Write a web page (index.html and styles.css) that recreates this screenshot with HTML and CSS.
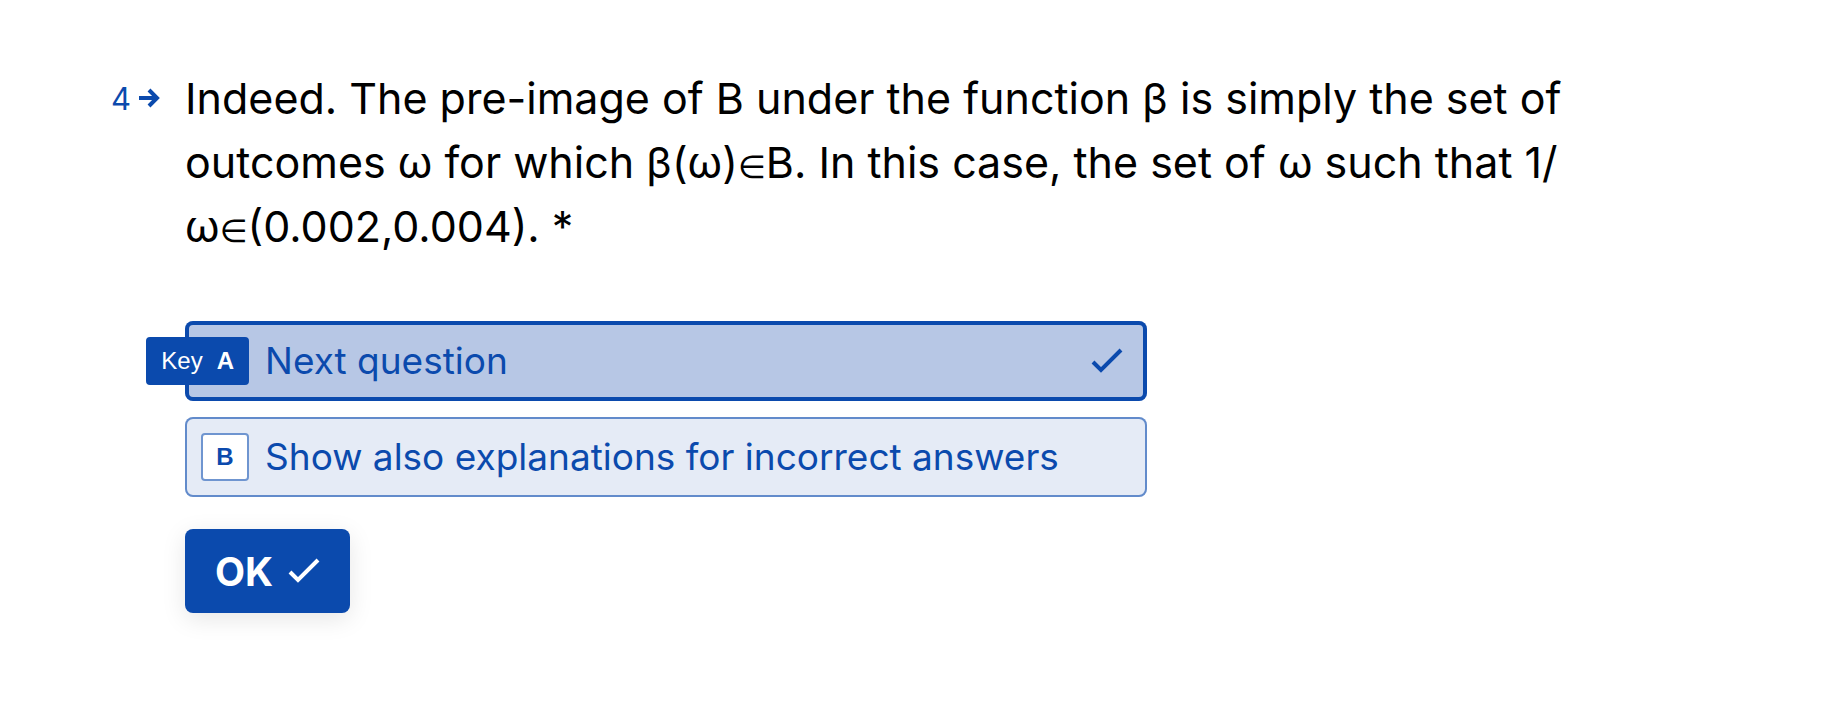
FILE: index.html
```html
<!DOCTYPE html>
<html lang="en">
<head>
<meta charset="utf-8">
<meta name="viewport" content="width=device-width, initial-scale=1">
<title>Question 4</title>
<link rel="stylesheet" href="styles.css">
</head>
<body>
<form class="question">
  <div class="question-number">
    <span>4</span>
    <svg class="arrow" viewBox="0 0 22 20" aria-hidden="true"><path d="M0 10H18M10 2L18 10L10 18"/></svg>
  </div>
  <div class="question-body">
    <h1 class="title" id="title">Indeed. The pre-image of B under the function β is simply the set of outcomes ω for which β(ω)<span class="math">∈</span>B. In this case, the set of ω such that 1/<wbr>ω<span class="math">∈</span>(0.002,0.004). *</h1>
    <div class="options" role="radiogroup" aria-labelledby="title">
      <label class="option">
        <input class="option-input" type="radio" name="answer" value="a" checked>
        <span class="key"><span class="key-word">Key</span><span class="key-letter">A</span></span>
        <span class="option-text">Next question</span>
        <svg class="check" viewBox="0 0 32 26" aria-hidden="true"><path d="M2 14L10 22L30 2"/></svg>
      </label>
      <label class="option">
        <input class="option-input" type="radio" name="answer" value="b">
        <span class="key"><span class="key-letter">B</span></span>
        <span class="option-text">Show also explanations for incorrect answers</span>
      </label>
    </div>
    <button class="ok" type="button">OK
      <svg class="check" viewBox="0 0 32 26" aria-hidden="true"><path d="M2 14L10 22L30 2"/></svg>
    </button>
  </div>
</form>
</body>
</html>
```

FILE: styles.css
```css
:root {
  --blue: #0b4aad;
}

* {
  box-sizing: border-box;
}

body {
  margin: 0;
  background: #fff;
  color: #000;
  font-family: Inter, "Noto Sans", sans-serif;
}

.question {
  display: flex;
  gap: 24px;
  padding: 66px 240px 72px 111px;
}

.question-number {
  display: flex;
  flex: none;
  align-items: center;
  gap: 8px;
  height: 64px;
  color: var(--blue);
  font-size: 31px;
}

.arrow {
  width: 22px;
  height: 20px;
  fill: none;
  stroke: var(--blue);
  stroke-width: 4;
}

.question-body {
  flex: 1;
  min-width: 0;
}

.title {
  margin: 0;
  font-size: 43px;
  font-weight: 400;
  line-height: 64px;
}

.math {
  font-family: "DejaVu Sans", sans-serif;
  font-size: 32px;
  line-height: 1;
}

.options {
  display: flex;
  flex-direction: column;
  gap: 16px;
  max-width: 962px;
  margin-top: 63px;
}

.option {
  position: relative;
  display: flex;
  align-items: center;
  min-height: 80px;
  padding: 8px 24px 8px 80px;
  border-radius: 8px;
  background: #e5ebf6;
  box-shadow: inset 0 0 0 2px #628bcb;
  color: var(--blue);
  cursor: pointer;
}

.option:has(:checked) {
  background: #b7c7e5;
  box-shadow: inset 0 0 0 4px var(--blue);
}

.option-input {
  position: absolute;
  opacity: 0;
}

.key {
  position: absolute;
  top: 16px;
  right: calc(100% - 64px);
  display: flex;
  align-items: center;
  justify-content: center;
  gap: 14px;
  min-width: 48px;
  height: 48px;
  padding: 0 13px;
  border: 2px solid #6f95d0;
  border-radius: 4px;
  background: #fff;
  font-family: "Liberation Sans", sans-serif;
  font-size: 24px;
}

:checked + .key {
  border-color: var(--blue);
  background: var(--blue);
  color: #fff;
}

.key-letter {
  font-weight: 700;
}

.option-text {
  flex: 1;
  font-size: 37px;
  line-height: 56px;
}

.check {
  flex: none;
  width: 32px;
  height: 26px;
  fill: none;
  stroke: currentColor;
  stroke-width: 4;
}

.ok {
  display: flex;
  align-items: center;
  gap: 15px;
  min-height: 84px;
  margin-top: 32px;
  padding: 0 30px;
  border: 0;
  border-radius: 8px;
  background: var(--blue);
  box-shadow: 0 6px 24px rgba(0, 0, 0, 0.1);
  color: #fff;
  font-family: inherit;
  font-size: 39px;
  font-weight: 700;
  cursor: pointer;
}
```
